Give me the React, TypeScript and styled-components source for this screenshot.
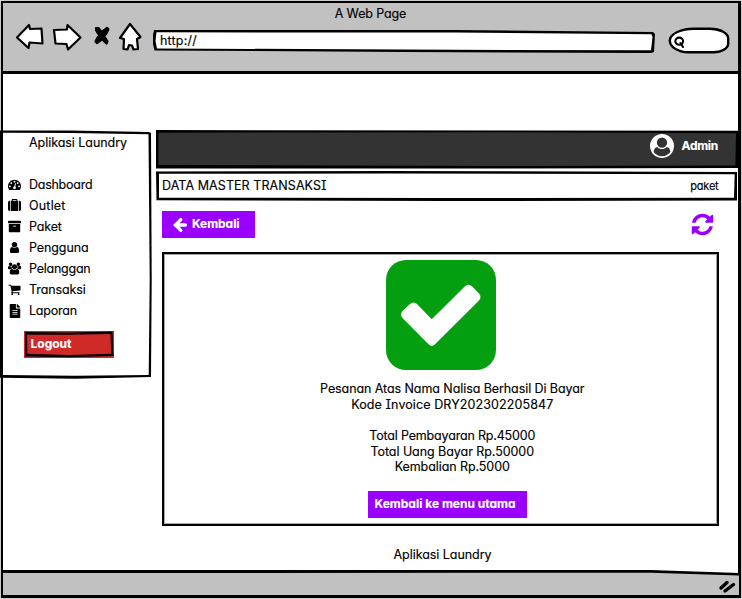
import React from 'react';
import styled, { createGlobalStyle } from 'styled-components';
import { FaArchive, FaFileAlt } from 'react-icons/fa';

const GlobalStyle = createGlobalStyle`
  * { box-sizing: border-box; }
  body { margin: 0; background: #fff; }
  svg { display: block; flex: none; overflow: visible; }
`;

const INK = '#000';
const CHROME = '#c1c1c1';
const PURPLE = '#9900ff';

/* A box whose outline wobbles like a pen stroke: an ink shape with the fill shape on top. */
const SketchBox = styled.div<{ $outer: string; $inner: string; $fill: string }>`
  position: relative;
  isolation: isolate;
  &::before,
  &::after {
    content: '';
    position: absolute;
    inset: 0;
    z-index: -1;
  }
  &::before {
    background: ${INK};
    clip-path: polygon(${p => p.$outer});
  }
  &::after {
    background: ${p => p.$fill};
    clip-path: polygon(${p => p.$inner});
  }
`;

const Text = styled.span<{ $track?: number; $size?: number }>`
  font-size: ${p => p.$size ?? 12.5}px;
  letter-spacing: ${p => p.$track ?? 0}px;
  white-space: nowrap;
`;

const BoldText = styled(Text)`
  font-size: 12px;
  font-weight: 700;
  color: #fff;
`;

const Window = styled.div`
  display: flex;
  flex-direction: column;
  width: 740px;
  height: 597px;
  margin: 1px;
  border: solid ${INK};
  border-width: 2px 3px 3px 2px;
  box-shadow: 0 0 0 0.5px rgba(0, 0, 0, 0.4);
  color: #000;
  font-family: Inter, 'Liberation Sans', sans-serif;
  font-feature-settings: 'cv11', 'cv08';
  -webkit-text-stroke: 0.15px currentColor;
`;

const Header = styled.header`
  height: 71px;
  flex: none;
  background: ${CHROME};
  border-bottom: 3px solid ${INK};
`;

const PageTitle = styled.div`
  height: 20px;
  line-height: 19px;
  text-align: center;
`;

const Tools = styled.div`
  display: flex;
  height: 30px;
  padding-left: 11px;
`;

const NavIcon = styled.svg<{ $gap: number }>`
  margin-right: ${p => p.$gap}px;
  fill: #fff;
  stroke: ${INK};
  stroke-width: 2.2;
  stroke-linejoin: round;
  stroke-linecap: round;
`;

const AddressBar = styled(SketchBox)`
  width: 502px;
  height: 23px;
  margin-top: 7px;
  margin-left: -1px;
  padding-left: 7px;
  line-height: 19px;
`;

const SearchPill = styled.div`
  width: 60px;
  height: 25px;
  margin: 5px 0 0 14px;
  padding: 6px 0 0 3px;
  background: #fff;
  border: 2px solid ${INK};
  border-radius: 26px 20px 16px 20px / 13px 11px 10px 13px;
  box-shadow: 0 0 0 0.4px ${INK};
`;

const Body = styled.div`
  display: flex;
  align-items: flex-start;
  flex: none;
  height: 496px;
  padding-top: 56px;
  background: #fff;
`;

const Sidebar = styled(SketchBox)`
  width: 152px;
  height: 249px;
  margin-left: -3px;
`;

const Brand = styled.div`
  padding-left: 29px;
  height: 44px;
  line-height: 23px;
`;

const NavItem = styled.div`
  display: flex;
  align-items: center;
  height: 21px;
  padding-left: 8px;
  gap: 8px;
`;

const IconSlot = styled.span`
  display: flex;
  justify-content: center;
  width: 13px;
  font-size: 13px;
`;

const LogoutFrame = styled.div`
  width: 90px;
  height: 27px;
  margin: 10px 0 0 24px;
  background: #cf2a27;
`;

const LogoutButton = styled(SketchBox)`
  height: 27px;
  padding-left: 6.5px;
  line-height: 23px;
`;

const Main = styled.main`
  width: 582px;
  margin-left: 4px;
`;

const TopBar = styled(SketchBox)`
  display: flex;
  align-items: flex-start;
  justify-content: flex-end;
  height: 39px;
  padding: 4px 20px 0 0;
  gap: 8px;
  line-height: 23px;
`;

const TitleBar = styled(SketchBox)`
  display: flex;
  justify-content: space-between;
  width: 581px;
  height: 30px;
  margin-top: 2px;
  padding: 0 18.5px 0 6px;
  line-height: 29px;
`;

const SmallLabel = styled(Text)`
  line-height: 31px;
`;

const Toolbar = styled.div`
  display: flex;
  justify-content: space-between;
  align-items: flex-start;
  height: 51px;
  padding: 10px 23px 0 6px;
`;

const RefreshIcon = styled.svg`
  margin-top: 1px;
`;

const Button = styled.div<{ $width: number; $pad: number }>`
  display: flex;
  width: ${p => p.$width}px;
  height: 27px;
  padding-left: ${p => p.$pad}px;
  gap: 5px;
  background: ${PURPLE};
  line-height: 25px;
`;

const Card = styled.section`
  display: flex;
  flex-direction: column;
  width: 557px;
  height: 274px;
  margin-left: 6px;
  padding-top: 6px;
  border: 2px solid ${INK};
  box-shadow: inset 0 0 0 1px rgba(0, 0, 0, 0.35);
`;

const CheckMark = styled.svg`
  margin-left: 222px;
`;

const Lines = styled.div<{ $top: number }>`
  display: flex;
  flex-direction: column;
  align-items: center;
  margin-top: ${p => p.$top}px;
  padding-left: 23.5px;
  line-height: 15.6px;
`;

const MenuAction = styled.div`
  margin: 15.8px 0 0 204px;
`;

const Credit = styled.div`
  margin-top: 15px;
  padding-left: 237.5px;
  line-height: 24px;
`;

const Footer = styled(SketchBox)`
  flex: 1;
  display: flex;
  justify-content: flex-end;
  margin-right: -1px;
  padding: 10px 3px 0 0;
`;

const paths = {
  dashboard:
    'M384 1152q0-53-37.5-90.5t-90.5-37.5-90.5 37.5-37.5 90.5 37.5 90.5 90.5 37.5 90.5-37.5 37.5-90.5zm192-448q0-53-37.5-90.5t-90.5-37.5-90.5 37.5-37.5 90.5 37.5 90.5 90.5 37.5 90.5-37.5 37.5-90.5zm428 481l101-382q6-26-7.5-48.5t-38.5-29.5-48 6.5-30 39.5l-101 382q-60 5-107 43.5t-63 98.5q-20 77 20 146t117 89 146-20 89-117q16-60-6-117t-72-91zm660-33q0-53-37.5-90.5t-90.5-37.5-90.5 37.5-37.5 90.5 37.5 90.5 90.5 37.5 90.5-37.5 37.5-90.5zm-640-640q0-53-37.5-90.5t-90.5-37.5-90.5 37.5-37.5 90.5 37.5 90.5 90.5 37.5 90.5-37.5 37.5-90.5zm448 192q0-53-37.5-90.5t-90.5-37.5-90.5 37.5-37.5 90.5 37.5 90.5 90.5 37.5 90.5-37.5 37.5-90.5zm320 448q0 261-141 483-19 29-54 29h-1402q-35 0-54-29-141-221-141-483 0-182 71-348t191-286 286-191 348-71 348 71 286 191 191 286 71 348z',
  suitcase:
    'M640 256h512v-128h-512v128zm-352 0v1408h-64q-92 0-158-66t-66-158v-960q0-92 66-158t158-66h64zm1120 0v1408h-1024v-1408h128v-160q0-40 28-68t68-28h576q40 0 68 28t28 68v160h128zm384 224v960q0 92-66 158t-158 66h-64v-1408h64q92 0 158 66t66 158z',
  user:
    'M1536 1399q0 109-62.5 187t-150.5 78h-854q-88 0-150.5-78t-62.5-187q0-85 8.5-160.5t31.5-152 58.5-131 94-89 134.5-34.5q131 128 313 128t313-128q76 0 134.5 34.5t94 89 58.5 131 31.5 152 8.5 160.5zm-256-887q0 159-112.5 271.5t-271.5 112.5-271.5-112.5-112.5-271.5 112.5-271.5 271.5-112.5 271.5 112.5 112.5 271.5z',
  users:
    'M593 896q-162 5-265 128h-134q-82 0-138-40.5t-56-118.5q0-353 124-353 6 0 43.5 21t97.5 42.5 119 21.5q67 0 133-23-5 37-5 66 0 159 93 293zm1071 637q0 120-73 189.5t-194 69.5h-874q-121 0-194-69.5t-73-189.5q0-53 3.5-103.5t14-109 26.5-108.5 43-97.5 62-81 85.5-53.5 111.5-20q10 0 43 21.5t73 48 107 48 135 21.5 135-21.5 107-48 73-48 43-21.5q61 0 111.5 20t85.5 53.5 62 81 43 97.5 26.5 108.5 14 109 3.5 103.5zm-1024-1277q0 106-75 181t-181 75-181-75-75-181 75-181 181-75 181 75 75 181zm704 384q0 159-112.5 271.5t-271.5 112.5-271.5-112.5-112.5-271.5 112.5-271.5 271.5-112.5 271.5 112.5 112.5 271.5zm576 225q0 78-56 118.5t-138 40.5h-134q-103-123-265-128 93-134 93-293 0-29-5-66 66 23 133 23 59 0 119-21.5t97.5-42.5 43.5-21q124 0 124 353zm-128-609q0 106-75 181t-181 75-181-75-75-181 75-181 181-75 181 75 75 181z',
  cart:
    'M704 1536q0 52-38 90t-90 38-90-38-38-90 38-90 90-38 90 38 38 90zm896 0q0 52-38 90t-90 38-90-38-38-90 38-90 90-38 90 38 38 90zm128-1088v512q0 24-16.5 42.5t-40.5 21.5l-1044 122q13 60 13 70 0 16-24 64h920q26 0 45 19t19 45-19 45-45 19h-1024q-26 0-45-19t-19-45q0-11 8-31.5t16-36 21.5-40 15.5-29.5l-177-823h-204q-26 0-45-19t-19-45 19-45 45-19h256q16 0 28.5 6.5t19.5 15.5 13 24.5 8 26 5.5 29.5 4.5 26h1201q26 0 45 19t19 45z',
  avatar:
    'M1523 1339q-22-155-87.5-257.5t-184.5-118.5q-67 74-159.5 115.5t-195.5 41.5-195.5-41.5-159.5-115.5q-119 16-184.5 118.5t-87.5 257.5q106 150 271 237.5t356 87.5 356-87.5 271-237.5zm-243-699q0-159-112.5-271.5t-271.5-112.5-271.5 112.5-112.5 271.5 112.5 271.5 271.5 112.5 271.5-112.5 112.5-271.5zm512 256q0 182-71 347.5t-190.5 286-285.5 191.5-349 71q-182 0-348-71t-286-191-191-286-71-348 71-348 191-286 286-191 348-71 348 71 286 191 191 286 71 348z',
  refresh:
    'M1639 1056q0 5-1 7-64 268-268 434.5t-478 166.5q-146 0-282.5-55t-243.5-157l-129 129q-19 19-45 19t-45-19-19-45v-448q0-26 19-45t45-19h448q26 0 45 19t19 45-19 45l-137 137q71 66 161 102t187 36q134 0 250-65t186-179q11-17 53-117 8-23 30-23h192q13 0 22.5 9.5t9.5 22.5zm25-800v448q0 26-19 45t-45 19h-448q-26 0-45-19t-19-45 19-45l138-138q-148-137-349-137-134 0-250 65t-186 179q-11 17-53 117-8 23-30 23h-199q-13 0-22.5-9.5t-9.5-22.5v-7q65-268 270-434.5t480-166.5q146 0 284 55.5t245 156.5l130-129q19-19 45-19t45 19 19 45z',
};

const MenuIcon = ({ d, wide = 1792, size = 13 }: { d: string; wide?: number; size?: number }) => (
  <svg width={size} height={size} viewBox={`0 0 ${wide} 1792`}>
    <path d={d} />
  </svg>
);

const menu: { label: string; track: number; icon: React.ReactNode }[] = [
  { label: 'Dashboard', track: -0.26, icon: <MenuIcon d={paths.dashboard} /> },
  { label: 'Outlet', track: 0.2, icon: <MenuIcon d={paths.suitcase} /> },
  { label: 'Paket', track: -0.15, icon: <FaArchive size={13} /> },
  { label: 'Pengguna', track: -0.1, icon: <MenuIcon d={paths.user} /> },
  { label: 'Pelanggan', track: -0.24, icon: <MenuIcon d={paths.users} wide={1920} /> },
  { label: 'Transaksi', track: -0.1, icon: <MenuIcon d={paths.cart} /> },
  { label: 'Laporan', track: -0.2, icon: <FaFileAlt size={14} /> },
];

export default function App() {
  return (
    <>
      <GlobalStyle />
      <Window>
        <Header>
          <PageTitle>
            <Text $track={-0.13}>A Web Page</Text>
          </PageTitle>
          <Tools>
            <NavIcon $gap={6} width="32" height="30" viewBox="14 23 32 30">
              <path d="M17 37.5 L29 25 L30 29 L41.5 28.5 L42.5 43.5 L29.5 42.5 L28.5 48 Z" />
            </NavIcon>
            <NavIcon $gap={9} width="31" height="30" viewBox="52 23 31 30">
              <path d="M54 30 L67 29.5 L67.5 25 L80.5 37.5 L68 49.5 L66.5 44 L55.5 43.5 Z" />
            </NavIcon>
            <NavIcon $gap={5} width="20" height="30" viewBox="92 23 20 30">
              <path
                d="M96 28 L98.5 28 Q103 34 107.5 41.5 L106.5 43.5 Q100 38 96 30 Z M107 27.8 L108.5 29 Q105 38 97 43 L95.5 41.5 Q99 33 107 27.8 Z"
                fill={INK}
              />
            </NavIcon>
            <NavIcon $gap={10} width="27" height="30" viewBox="117 23 27 30">
              <path d="M130 24 L140.5 37 L137 39 L138 49 L133.5 49.5 L132 45.5 L129 45 L127.5 49.5 L123.5 49 L124 39 L120 38 Z" />
            </NavIcon>
            <AddressBar
              $fill="#fff"
              $outer="1px 0, 60% 0, 500px 2px, 502px 4px, 501px 22px, 498px 23px, 50% 22px, 1.5px 20.5px, 0 14px, 0 5px"
              $inner="3.5px 2.3px, 60% 2.6px, 498.5px 4.2px, 499.5px 7px, 498px 20.3px, 50% 19.6px, 4px 18.4px, 2.5px 11px"
            >
              <Text $track={0.2}>http://</Text>
            </AddressBar>
            <SearchPill>
              <svg width="11" height="13" viewBox="0 0 11 13" fill="none" stroke={INK} strokeWidth="2.1">
                <ellipse cx="5.2" cy="5.2" rx="3.9" ry="3.6" />
                <path d="M6.5 7 L9 11" strokeLinecap="round" />
              </svg>
            </SearchPill>
          </Tools>
        </Header>

        <Body>
          <Sidebar
            $fill="#fff"
            $outer="0 0.5px, 70px 0.5px, 149px 2px, 151px 3px, 151.7px 60%, 151px 247px, 75px 248.7px, 0 247.7px"
            $inner="3px 2.7px, 70px 3px, 148.5px 4.3px, 149.7px 60%, 148.7px 245px, 75px 245.7px, 3px 245px"
          >
            <Brand>
              <Text $track={-0.05}>Aplikasi Laundry</Text>
            </Brand>
            {menu.map(item => (
              <NavItem key={item.label}>
                <IconSlot>{item.icon}</IconSlot>
                <Text $track={item.track}>{item.label}</Text>
              </NavItem>
            ))}
            <LogoutFrame>
              <LogoutButton
                $fill="#cf2a27"
                $outer="1px 1px, 45px 1.5px, 88.5px 0.5px, 89.5px 25px, 45px 26.3px, 1px 25.5px"
                $inner="3px 3.7px, 45px 3.7px, 86.5px 3px, 87.2px 22.7px, 45px 24px, 3.3px 22.8px"
              >
                <BoldText>Logout</BoldText>
              </LogoutButton>
            </LogoutFrame>
          </Sidebar>

          <Main>
            <TopBar
              $fill="#333"
              $outer="0 0, 100% 0.8px, 582px 38px, 60% 38.5px, 0 38.6px"
              $inner="2.5px 2.7px, 60% 2.3px, 580px 3.3px, 579.4px 35.6px, 60% 36px, 2.5px 35px"
            >
              <svg width="24" height="24" viewBox="0 0 1792 1792" fill="#fff">
                <path d={paths.avatar} />
              </svg>
              <BoldText $track={-0.3}>Admin</BoldText>
            </TopBar>
            <TitleBar
              $fill="#fff"
              $outer="0 0.5px, 40% 0, 100% 1px, 100% 29.5px, 50% 30px, 0.5px 29.3px"
              $inner="3px 2.8px, 40% 2.6px, 578.7px 3.2px, 578px 26.8px, 50% 27px, 3px 26.8px"
            >
              <Text $track={0.08}>DATA MASTER TRANSAKSI</Text>
              <SmallLabel $size={11} $track={-0.2}>paket</SmallLabel>
            </TitleBar>
            <Toolbar>
              <Button $width={93} $pad={11}>
                <svg
                  width="14"
                  height="27"
                  viewBox="0 0 14 27"
                  fill="none"
                  stroke="#fff"
                  strokeWidth="3.4"
                  strokeLinecap="round"
                >
                  <path d="M12.3 14 H3.5 M7.8 8.6 L2.4 14 L7.8 19.4" />
                </svg>
                <BoldText $track={-0.05}>Kembali</BoldText>
              </Button>
              <RefreshIcon width="25" height="25" viewBox="0 0 1792 1792" fill={PURPLE}>
                <path d={paths.refresh} />
              </RefreshIcon>
            </Toolbar>
            <Card>
              <CheckMark width="110" height="110" viewBox="0 0 110 110">
                <rect width="110" height="110" rx="20" fill="#049f11" />
                <path
                  fill="#fff"
                  d="M45.7 59.3 L79 26.3 Q82.5 23 86 26.3 L93 33.5 Q96 37 93 40.5 L49 84.3 Q45.7 87.5 42.5 84.3 L16.5 58 Q13.5 54.5 16.5 51 L24 44 Q27.5 41 31 44 Z"
                />
              </CheckMark>
              <Lines $top={11}>
                <Text $track={-0.08}>Pesanan Atas Nama Nalisa Berhasil Di Bayar</Text>
                <Text $track={0.1}>Kode Invoice DRY202302205847</Text>
              </Lines>
              <Lines $top={16}>
                <Text $track={-0.18}>Total Pembayaran Rp.45000</Text>
                <Text $track={-0.06}>Total Uang Bayar Rp.50000</Text>
                <Text $track={-0.08}>Kembalian Rp.5000</Text>
              </Lines>
              <MenuAction>
                <Button $width={159} $pad={6.5}>
                  <BoldText>Kembali ke menu utama</BoldText>
                </Button>
              </MenuAction>
            </Card>
            <Credit>
              <Text $track={-0.05}>Aplikasi Laundry</Text>
            </Credit>
          </Main>
        </Body>

        <Footer
          $fill={CHROME}
          $outer="0 0, 88% 0, 100% 3px, 100% 100%, 0 100%"
          $inner="0 3px, 88% 2.7px, 100% 5.5px, 100% 100%, 0 100%"
        >
          <svg width="18" height="14" viewBox="719 580 18 14" stroke={INK} strokeWidth="3.4" strokeLinecap="round">
            <path d="M722 588 L728 582.5 M726 591 L734.5 584.5" />
          </svg>
        </Footer>
      </Window>
    </>
  );
}
